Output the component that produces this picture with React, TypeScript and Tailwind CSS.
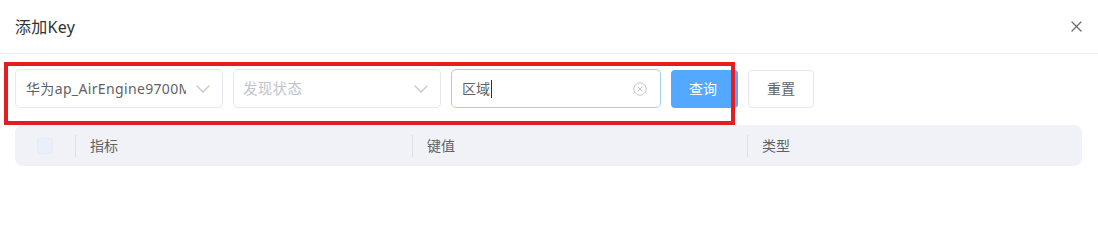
import React from "react";

const font = { fontFamily: '"Noto Sans", "Noto Sans CJK SC", sans-serif' };

function Chevron() {
  return (
    <svg width="14" height="8" viewBox="0 0 14 8" fill="none" className="shrink-0">
      <path d="M1 1l6 6 6-6" stroke="#c0c4cc" strokeWidth="1.2" strokeLinecap="round" strokeLinejoin="round" />
    </svg>
  );
}

export default function App() {
  return (
    <div className="relative w-[1098px] h-[248px] bg-white text-[#303133]" style={font}>
      <div className="h-[54px] border-b border-[#ebeef5] flex items-center justify-between pl-[15px] pr-[15px]">
        <span className="text-[16px] leading-none text-[#303133] tracking-[0.3px]">添加Key</span>
        <svg width="11" height="11" viewBox="0 0 11 11" className="mr-[1px]">
          <path d="M1 1l9 9M10 1l-9 9" stroke="#707070" strokeWidth="1.4" strokeLinecap="round" />
        </svg>
      </div>
      <div className="px-[15px] pt-[15px]">
        <div className="flex items-center gap-[10px] h-[39px]">
          <div className="w-[208px] h-[39px] border border-[#e4e7ed] rounded-[5px] flex items-center pl-[10px] pr-[12px] gap-[10px]">
            <span className="flex-1 overflow-hidden whitespace-nowrap text-[14px] tracking-[0.35px] text-[#606266]">华为ap_AirEngine9700M</span>
            <Chevron />
          </div>
          <div className="w-[208px] h-[39px] border border-[#e4e7ed] rounded-[5px] flex items-center pl-[9px] pr-[12px] gap-[8px]">
            <span className="flex-1 overflow-hidden whitespace-nowrap text-[14.5px] tracking-[0.3px] text-[#c0c4cc]">发现状态</span>
            <Chevron />
          </div>
          <div className="w-[210px] h-[39px] border border-[#a3cdf2] rounded-[5px] flex items-center pl-[10px] pr-[13px]">
            <span className="flex-1 flex items-center text-[14px] text-[#606266]">
              区域<span className="inline-block w-[1px] h-[18px] bg-[#303133] ml-[1px]" />
            </span>
            <svg width="14" height="14" viewBox="0 0 14 14" fill="none">
              <circle cx="7" cy="7" r="6.2" stroke="#c0c4cc" strokeWidth="1" />
              <path d="M5 5l4 4M9 5l-4 4" stroke="#c0c4cc" strokeWidth="1" strokeLinecap="round" />
            </svg>
          </div>
          <div className="w-[67px] h-[38px] rounded-[4px] bg-[#53a8ff] text-white text-[14px] flex items-center justify-center pr-[3px]">查询</div>
          <div className="w-[66px] h-[38px] rounded-[4px] border border-[#e4e7ed] text-[#606266] text-[14px] flex items-center justify-center">重置</div>
        </div>
        <div className="mt-[17px] h-[41px] w-[1067px] rounded-[8px] bg-[#f0f2f7] flex items-center text-[14px] text-[#606266]">
          <div className="w-[60px] flex items-center justify-center pr-[1px]">
            <div className="w-[16px] h-[16px] rounded-[3px] border border-[#e6ebf5] bg-[#eaf0fb]" />
          </div>
          <div className="w-[337px] flex items-center">
            <div className="w-[1px] h-[22px] bg-[#dcdfe6]" />
            <span className="ml-[14px]">指标</span>
          </div>
          <div className="w-[335px] flex items-center">
            <div className="w-[1px] h-[22px] bg-[#dcdfe6]" />
            <span className="ml-[14px]">键值</span>
          </div>
          <div className="flex-1 flex items-center">
            <div className="w-[1px] h-[22px] bg-[#dcdfe6]" />
            <span className="ml-[14px]">类型</span>
          </div>
        </div>
      </div>
      <div className="absolute left-[4px] top-[62px] w-[731px] h-[63px] border-[4px] border-[#e41e20] pointer-events-none" />
    </div>
  );
}
